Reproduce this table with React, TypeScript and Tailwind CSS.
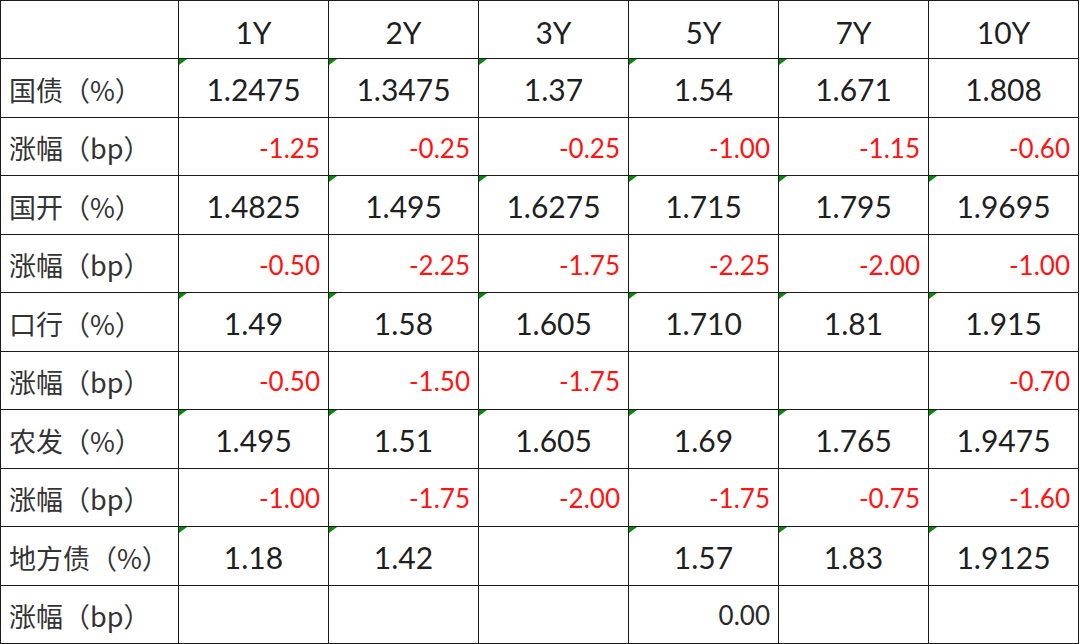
const terms = ["1Y", "2Y", "3Y", "5Y", "7Y", "10Y"];

type Row = {
  label: string;
  kind: "rate" | "chg";
  values: string[];
  marks?: boolean[];
};

const rows: Row[] = [
  { label: "国债（%）", kind: "rate", values: ["1.2475", "1.3475", "1.37", "1.54", "1.671", "1.808"], marks: [true, true, true, true, true, false] },
  { label: "涨幅（bp）", kind: "chg", values: ["-1.25", "-0.25", "-0.25", "-1.00", "-1.15", "-0.60"] },
  { label: "国开（%）", kind: "rate", values: ["1.4825", "1.495", "1.6275", "1.715", "1.795", "1.9695"], marks: [false, true, true, true, true, true] },
  { label: "涨幅（bp）", kind: "chg", values: ["-0.50", "-2.25", "-1.75", "-2.25", "-2.00", "-1.00"] },
  { label: "口行（%）", kind: "rate", values: ["1.49", "1.58", "1.605", "1.710", "1.81", "1.915"], marks: [true, true, true, true, true, true] },
  { label: "涨幅（bp）", kind: "chg", values: ["-0.50", "-1.50", "-1.75", "", "", "-0.70"] },
  { label: "农发（%）", kind: "rate", values: ["1.495", "1.51", "1.605", "1.69", "1.765", "1.9475"], marks: [true, true, true, true, true, true] },
  { label: "涨幅（bp）", kind: "chg", values: ["-1.00", "-1.75", "-2.00", "-1.75", "-0.75", "-1.60"] },
  { label: "地方债（%）", kind: "rate", values: ["1.18", "1.42", "", "1.57", "1.83", "1.9125"], marks: [true, true, false, true, true, true] },
  { label: "涨幅（bp）", kind: "chg", values: ["", "", "", "0.00", "", ""] },
];

// little green "number stored as text" flag in the cell corner
function Mark() {
  return (
    <span className="absolute left-0 top-0 h-0 w-0 border-l-[8px] border-b-[6px] border-l-[#078a07] border-b-transparent" />
  );
}

export default function App() {
  return (
    <div className="h-[644px] w-[1080px] bg-white">
      <div className="grid h-[644px] w-[1079px] grid-cols-[178px_repeat(6,150px)] grid-rows-11 border-l-[1.5px] border-t-[1.5px] border-[#1a1a1a] font-['Lato','Noto_Sans_CJK_SC',sans-serif]">
        <div className="border-b-[1.5px] border-r-[1.5px] border-[#1a1a1a]" />
        {terms.map((t) => (
          <div
            key={t}
            className="flex items-center justify-center border-b-[1.5px] border-r-[1.5px] border-[#1a1a1a] pt-[6px] text-[30px] text-[#1f1f1f]"
          >
            {t}
          </div>
        ))}
        {rows.map((row, ri) => (
          <>
            <div
              key={`l${ri}`}
              className="flex items-center whitespace-nowrap border-b-[1.5px] border-r-[1.5px] border-[#1a1a1a] pl-[8px] pt-[4px] font-['Noto_Sans_CJK_SC',sans-serif] text-[27px] text-[#333]"
            >
              {row.label}
            </div>
            {row.values.map((v, ci) => (
              <div
                key={`${ri}-${ci}`}
                className={
                  row.kind === "rate"
                    ? "relative flex items-center justify-center border-b-[1.5px] border-r-[1.5px] border-[#1a1a1a] pt-[3px] text-[30px] text-[#1f1f1f]"
                    : v.startsWith("-")
                      ? "flex items-center justify-end border-b-[1.5px] border-r-[1.5px] border-[#1a1a1a] pr-[8px] pt-[3px] text-[26px] text-[#ff1414]"
                      : "flex items-center justify-end border-b-[1.5px] border-r-[1.5px] border-[#1a1a1a] pr-[8px] pt-[3px] text-[26px] text-[#2a2a2a]"
                }
              >
                {row.marks && row.marks[ci] && <Mark />}
                {v}
              </div>
            ))}
          </>
        ))}
      </div>
    </div>
  );
}
